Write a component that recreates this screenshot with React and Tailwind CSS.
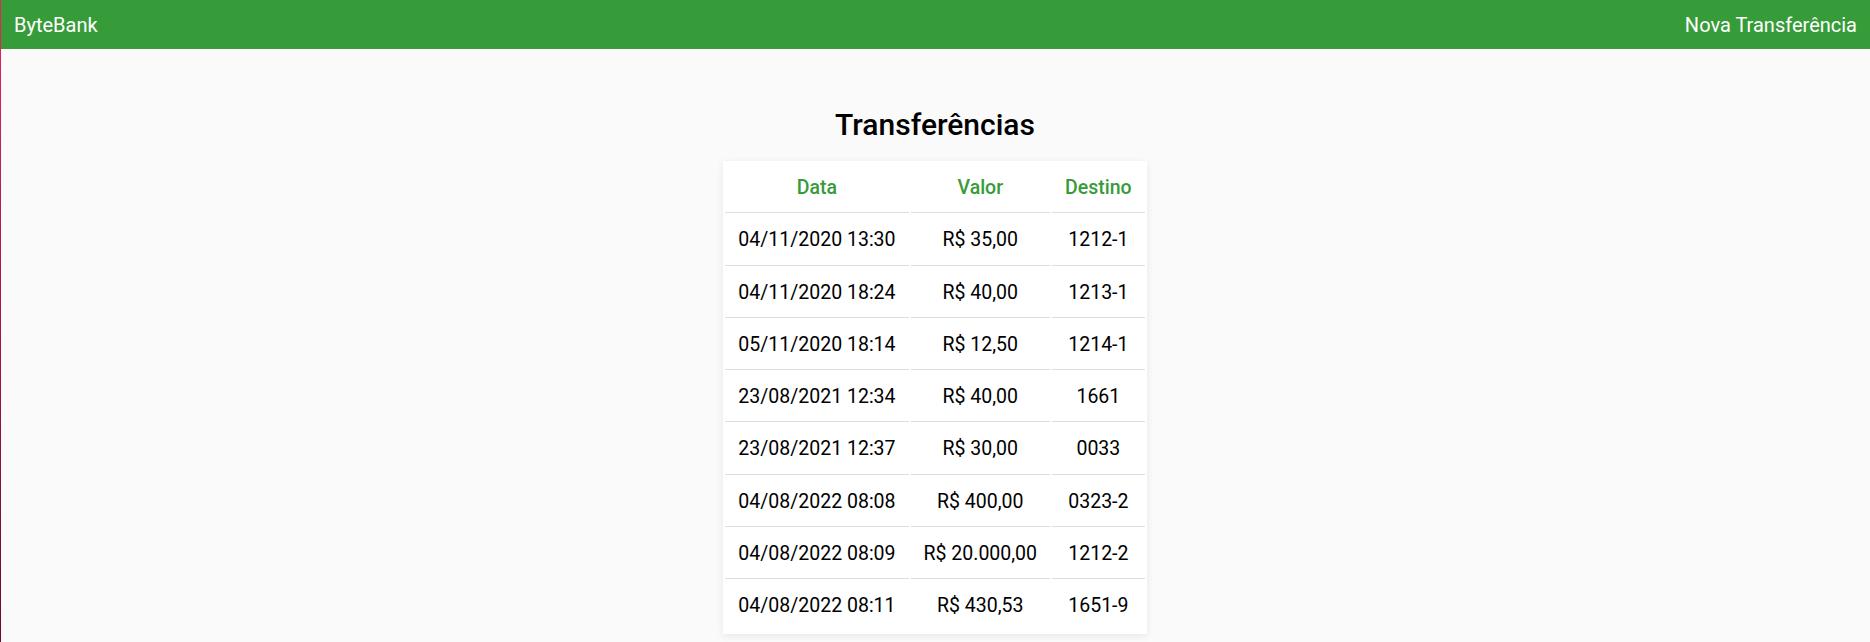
import React from "react";

const rows = [
  ["04/11/2020 13:30", "R$ 35,00", "1212-1"],
  ["04/11/2020 18:24", "R$ 40,00", "1213-1"],
  ["05/11/2020 18:14", "R$ 12,50", "1214-1"],
  ["23/08/2021 12:34", "R$ 40,00", "1661"],
  ["23/08/2021 12:37", "R$ 30,00", "0033"],
  ["04/08/2022 08:08", "R$ 400,00", "0323-2"],
  ["04/08/2022 08:09", "R$ 20.000,00", "1212-2"],
  ["04/08/2022 08:11", "R$ 430,53", "1651-9"],
];

export default function App() {
  return (
    <div
      className="relative min-h-[642px] bg-[#fafafa] text-black"
      style={{ fontFamily: "Roboto, 'Liberation Sans', sans-serif" }}
    >
      <div className="absolute left-0 top-0 bottom-0 w-px bg-gradient-to-b from-[#e8245c] to-[#6e0a26]" />
      <header className="flex h-[49px] items-center justify-between bg-[#369c3a] pl-[14px] pr-[13px] text-[20px] text-white">
        <span>ByteBank</span>
        <span>Nova Transferência</span>
      </header>
      <main className="flex flex-col items-center">
        <h1 className="mt-[57px] text-[30px] font-medium leading-[37.5px]">Transferências</h1>
        <table className="mt-[17.5px] border-separate border-spacing-[2px] bg-white text-[19.5px] shadow-[0_2px_8px_rgba(0,0,0,0.08)]">
          <thead>
            <tr>
              {["Data", "Valor", "Destino"].map((h) => (
                <th
                  key={h}
                  className="border-b border-[#dedede] px-[13px] py-[13px] text-center font-medium leading-[23.3px] text-[#379b3a]"
                >
                  {h}
                </th>
              ))}
            </tr>
          </thead>
          <tbody>
            {rows.map((r, i) => (
              <tr key={i}>
                {r.map((c, j) => (
                  <td
                    key={j}
                    className={
                      "px-[13px] py-[13px] text-center leading-[23.3px] " +
                      (i < rows.length - 1 ? "border-b border-[#dedede]" : "border-b border-transparent")
                    }
                  >
                    {c}
                  </td>
                ))}
              </tr>
            ))}
          </tbody>
        </table>
      </main>
    </div>
  );
}
